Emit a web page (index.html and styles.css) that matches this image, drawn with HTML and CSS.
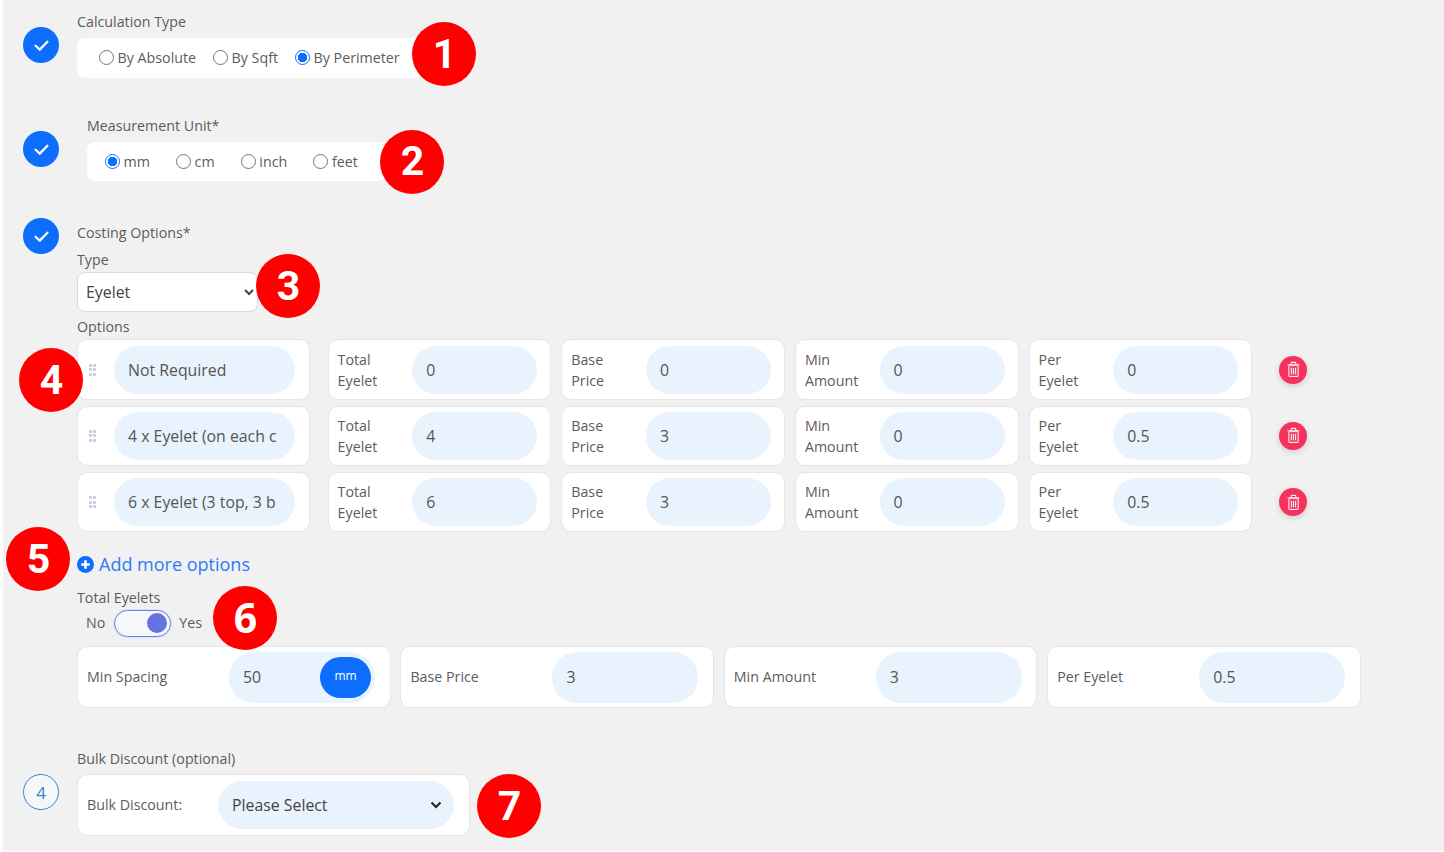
FILE: index.html
```html
<!DOCTYPE html>
<html lang="en">
<head>
<meta charset="utf-8">
<title>Costing options</title>
<link rel="stylesheet" href="styles.css">
</head>
<body>
<main class="page">
  <section class="step step-calc">
    <span class="step-icon done"><svg viewBox="0 0 16 16"><path d="M3 8.200 6.500 11.500 13 4.800"/></svg></span>
    <div class="step-body">
      <div class="label">Calculation Type</div>
      <div class="radio-card calc-card">
        <label class="radio"><input type="radio" name="calc"><span>By Absolute</span></label>
        <label class="radio"><input type="radio" name="calc"><span>By Sqft</span></label>
        <label class="radio"><input type="radio" name="calc" checked><span>By Perimeter</span></label>
      </div>
    </div>
  </section>

  <section class="step step-unit">
    <span class="step-icon done"><svg viewBox="0 0 16 16"><path d="M3 8.200 6.500 11.500 13 4.800"/></svg></span>
    <div class="step-body indented">
      <div class="label">Measurement Unit*</div>
      <div class="radio-card unit-card">
        <label class="radio"><input type="radio" name="unit" checked><span>mm</span></label>
        <label class="radio"><input type="radio" name="unit"><span>cm</span></label>
        <label class="radio"><input type="radio" name="unit"><span>inch</span></label>
        <label class="radio"><input type="radio" name="unit"><span>feet</span></label>
      </div>
    </div>
  </section>

  <section class="step step-costing">
    <span class="step-icon done"><svg viewBox="0 0 16 16"><path d="M3 8.200 6.500 11.500 13 4.800"/></svg></span>
    <div class="step-body">
      <div class="label">Costing Options*</div>
      <div class="label label-type">Type</div>
      <select class="type-select"><option>Eyelet</option></select>
      <div class="label label-options">Options</div>

      <div class="option-rows">
        <div class="option-row">
          <div class="card name-card">
            <span class="drag"><i></i><i></i><i></i><i></i><i></i><i></i></span>
            <div class="pill name-pill"><span class="clip">Not Required</span></div>
          </div>
          <div class="card field"><span class="field-label">Total Eyelet</span><div class="pill"><span>0</span></div></div>
          <div class="card field"><span class="field-label">Base Price</span><div class="pill"><span>0</span></div></div>
          <div class="card field"><span class="field-label">Min Amount</span><div class="pill"><span>0</span></div></div>
          <div class="card field"><span class="field-label">Per Eyelet</span><div class="pill"><span>0</span></div></div>
          <button class="trash" type="button" aria-label="Delete"><svg viewBox="0 0 16 18"><rect class="bin" x="3" y="4.500" width="10" height="12" rx="1.200"/><path d="M1.500 4h13M5.500 3.600V2.200c0-.5.3-.8.8-.8h3.400c.5 0 .8.3.8.8v1.400M5.800 7.500v6.500M8 7.500v6.500M10.200 7.500v6.500"/></svg></button>
        </div>
        <div class="option-row">
          <div class="card name-card">
            <span class="drag"><i></i><i></i><i></i><i></i><i></i><i></i></span>
            <div class="pill name-pill"><span class="clip">4 x Eyelet (on each corner)</span></div>
          </div>
          <div class="card field"><span class="field-label">Total Eyelet</span><div class="pill"><span>4</span></div></div>
          <div class="card field"><span class="field-label">Base Price</span><div class="pill"><span>3</span></div></div>
          <div class="card field"><span class="field-label">Min Amount</span><div class="pill"><span>0</span></div></div>
          <div class="card field"><span class="field-label">Per Eyelet</span><div class="pill"><span>0.5</span></div></div>
          <button class="trash" type="button" aria-label="Delete"><svg viewBox="0 0 16 18"><rect class="bin" x="3" y="4.500" width="10" height="12" rx="1.200"/><path d="M1.500 4h13M5.500 3.600V2.200c0-.5.3-.8.8-.8h3.400c.5 0 .8.3.8.8v1.400M5.800 7.500v6.500M8 7.500v6.500M10.200 7.500v6.500"/></svg></button>
        </div>
        <div class="option-row">
          <div class="card name-card">
            <span class="drag"><i></i><i></i><i></i><i></i><i></i><i></i></span>
            <div class="pill name-pill"><span class="clip">6 x Eyelet (3 top, 3 bottom)</span></div>
          </div>
          <div class="card field"><span class="field-label">Total Eyelet</span><div class="pill"><span>6</span></div></div>
          <div class="card field"><span class="field-label">Base Price</span><div class="pill"><span>3</span></div></div>
          <div class="card field"><span class="field-label">Min Amount</span><div class="pill"><span>0</span></div></div>
          <div class="card field"><span class="field-label">Per Eyelet</span><div class="pill"><span>0.5</span></div></div>
          <button class="trash" type="button" aria-label="Delete"><svg viewBox="0 0 16 18"><rect class="bin" x="3" y="4.500" width="10" height="12" rx="1.200"/><path d="M1.500 4h13M5.500 3.600V2.200c0-.5.3-.8.8-.8h3.400c.5 0 .8.3.8.8v1.400M5.800 7.500v6.500M8 7.500v6.500M10.200 7.500v6.500"/></svg></button>
        </div>
      </div>

      <a class="add-more" href="#"><svg viewBox="0 0 16 16"><circle cx="8" cy="8" r="8"/><path d="M8 4v8M4 8h8"/></svg><span>Add more options</span></a>

      <div class="label label-total">Total Eyelets</div>
      <div class="toggle-row">
        <span class="toggle-text">No</span>
        <span class="toggle"><i></i></span>
        <span class="toggle-text">Yes</span>
      </div>

      <div class="totals">
        <div class="card total"><span class="field-label">Min Spacing</span><div class="pill unit-pill"><span>50</span><b>mm</b></div></div>
        <div class="card total"><span class="field-label">Base Price</span><div class="pill"><span>3</span></div></div>
        <div class="card total"><span class="field-label">Min Amount</span><div class="pill"><span>3</span></div></div>
        <div class="card total"><span class="field-label">Per Eyelet</span><div class="pill"><span>0.5</span></div></div>
      </div>
    </div>
  </section>

  <section class="step step-bulk">
    <span class="step-icon pending">4</span>
    <div class="step-body">
      <div class="label">Bulk Discount (optional)</div>
      <div class="card bulk-card">
        <span class="field-label">Bulk Discount:</span>
        <div class="bulk-pill">
          <select class="bulk-select"><option>Please Select</option></select>
          <svg class="chevron" viewBox="0 0 12 8"><path d="M1.500 1.500 6 6l4.500-4.500"/></svg>
        </div>
      </div>
    </div>
  </section>

  <span class="badge b1">1</span>
  <span class="badge b2">2</span>
  <span class="badge b3">3</span>
  <span class="badge b4">4</span>
  <span class="badge b5">5</span>
  <span class="badge b6">6</span>
  <span class="badge b7">7</span>
</main>
</body>
</html>
```

FILE: styles.css
```css
* { box-sizing: border-box; }
html, body { margin: 0; background: #fff; }
body { width: 1444px; height: 852px; overflow: hidden; font-family: "Open Sans", "Noto Sans", sans-serif; color: #555; }

.page {
  position: relative;
  width: 1441px;
  height: 851px;
  margin-left: 3px;
  padding: 13px 0 0 20px;
  background: #f1f1f1;
}

.step { display: flex; gap: 18px; align-items: flex-start; }
.step-unit { margin-top: 39px; }
.step-costing { margin-top: 43px; }
.step-bulk { margin-top: 42px; }
.step-body { flex: 1; min-width: 0; }
.indented { padding-left: 10px; }

.step-icon { flex: 0 0 36px; width: 36px; height: 36px; border-radius: 50%; display: flex; align-items: center; justify-content: center; }
.done { background: #0d6efd; }
.done svg { width: 19px; height: 19px; fill: none; stroke: #fff; stroke-width: 1.9; stroke-linecap: round; stroke-linejoin: round; }
.step-calc .step-icon { margin-top: 14px; }
.step-unit .step-icon { margin-top: 14px; }
.step-costing .step-icon { margin-top: -6px; }
.step-bulk .step-icon { margin-top: 24px; }
.pending { border: 1px solid #3c83c4; background: #f4f8fb; color: #3c83c4; font-size: 17px; }

.label { font-size: 14.25px; line-height: 18px; color: #5c5c5c; }
.label-type { margin-top: 9px; }
.label-options { margin-top: 6px; }
.label-total { margin-top: 13px; }

.radio-card { display: flex; align-items: center; margin-top: 7px; background: #fff; border-radius: 8px; }
.calc-card { width: 345px; height: 40px; padding: 0 0 1px 22px; gap: 17px; }
.unit-card { width: 300px; height: 39px; padding-left: 18px; gap: 26.2px; }
.radio { display: flex; align-items: center; gap: 3.5px; font-size: 14.25px; color: #5c5c5c; }
.radio input { appearance: none; width: 15px; height: 15px; margin: 0; border: 1px solid #767676; border-radius: 50%; background: #fff; }
.radio input:checked { border-color: #0d6efd; background: radial-gradient(circle, #0d6efd 0 4.5px, #fff 5px); }

.type-select {
  display: block;
  width: 181px;
  height: 40px;
  margin-top: 3px;
  padding-left: 4px;
  border: 1px solid #d6dbe2;
  border-radius: 8px;
  background: #fff;
  color: #444;
  font: 15.85px "Open Sans", sans-serif;
}

.option-rows { display: flex; flex-direction: column; gap: 6px; margin-top: 3.4px; }
.option-row { display: flex; align-items: center; gap: 10px; height: 60.3px; }

.card { display: flex; align-items: center; background: #fff; border: 1px solid #e6e6e6; border-radius: 10px; }
.name-card { flex: 0 0 233px; height: 100%; margin-right: 7.6px; padding: 0 14px 0 11px; justify-content: space-between; }
.field { flex: 0 0 223.67px; height: 100%; padding: 0 13px 0 9px; justify-content: space-between; }
.field-label { font-size: 14.25px; line-height: 21px; color: #5c5c5c; }
.field .field-label { width: 60px; }

.pill { display: flex; align-items: center; background: #e8f3fe; border-radius: 25px; padding: 0 14px; color: #555; font-size: 15.85px; }
.field .pill { width: 125px; height: 48px; }
.name-pill { flex: 0 0 181px; width: 181px; min-width: 0; height: 48px; padding-right: 19px; }
.clip { display: block; overflow: hidden; white-space: nowrap; width: 100%; }

.drag { display: grid; grid-template-columns: repeat(2, 3px); grid-auto-rows: 3px; column-gap: 1px; row-gap: 1.5px; }
.drag i { background: #c3cddb; border-radius: 1px; }

.trash { display: flex; align-items: center; justify-content: center; width: 28px; height: 28px; margin-left: 17px; padding: 0; border: 0; border-radius: 50%; background: #f5325c; box-shadow: 0 2px 6px rgba(0, 0, 0, .15); }
.trash svg { width: 15px; height: 17px; fill: none; stroke: #fff; stroke-width: 1.1; opacity: .9; }
.trash .bin { fill: rgba(255, 255, 255, .12); }

.add-more { display: flex; align-items: center; gap: 5px; width: max-content; margin-top: 20px; height: 24px; font-size: 18px; color: #2b7cf6; text-decoration: none; }
.add-more svg { width: 17px; height: 17px; }
.add-more circle { fill: #0d6efd; }
.add-more path { stroke: #fff; stroke-width: 2.4; }

.toggle-row { display: flex; align-items: center; gap: 9px; height: 24px; margin-top: 4px; padding-left: 9px; font-size: 14.25px; color: #5c5c5c; }
.toggle-text { padding-bottom: 1px; }
.toggle { display: flex; align-items: center; justify-content: flex-end; width: 57px; height: 27px; margin-right: -1px; padding-right: 3px; border: 1px solid #6f80e4; border-radius: 14px; background: #f7f7fa; box-shadow: 0 0 0 1px #dbe0f8; }
.toggle i { width: 20px; height: 20px; border-radius: 50%; background: #6374e0; }

.totals { display: flex; gap: 9.9px; margin-top: 11px; }
.total { flex: 0 0 313.5px; height: 62px; padding: 0 14.5px 1px 9px; justify-content: space-between; }
.total .field-label { padding-bottom: 1px; }
.total .pill { width: 146px; height: 51px; margin-bottom: -1px; }
.unit-pill { justify-content: space-between; padding-right: 4px; }
.unit-pill b { display: flex; align-items: center; justify-content: center; width: 51px; height: 41px; padding-bottom: 3px; border-radius: 21px; background: #0d6efd; color: #fff; font-size: 12px; font-weight: 400; }

.bulk-card { width: 393px; height: 62px; margin-top: 6px; padding: 0 15px 1px 9px; justify-content: space-between; }
.bulk-pill { position: relative; width: 236px; height: 48px; margin-bottom: -1px; }
.bulk-select { appearance: none; width: 100%; height: 100%; padding-left: 14px; border: 0; border-radius: 25px; background: #e8f3fe; color: #444; font: 15.85px "Open Sans", sans-serif; }
.chevron { position: absolute; right: 12px; top: 20px; width: 12px; height: 8px; fill: none; stroke: #222; stroke-width: 2; pointer-events: none; }

.badge { position: absolute; display: flex; align-items: center; justify-content: center; width: 64px; height: 64px; padding-left: 1px; border-radius: 50%; background: #ff0000; color: #fff; font: 700 41px/1 Roboto, sans-serif; }
.b1 { left: 409px; top: 22px; }
.b2 { left: 377px; top: 129.5px; }
.b3 { left: 253px; top: 254px; }
.b4 { left: 16px; top: 348px; }
.b5 { left: 3px; top: 527px; }
.b6 { left: 210px; top: 586px; padding-bottom: 2px; font-family: "Open Sans", sans-serif; }
.b7 { left: 474px; top: 774px; }
```
